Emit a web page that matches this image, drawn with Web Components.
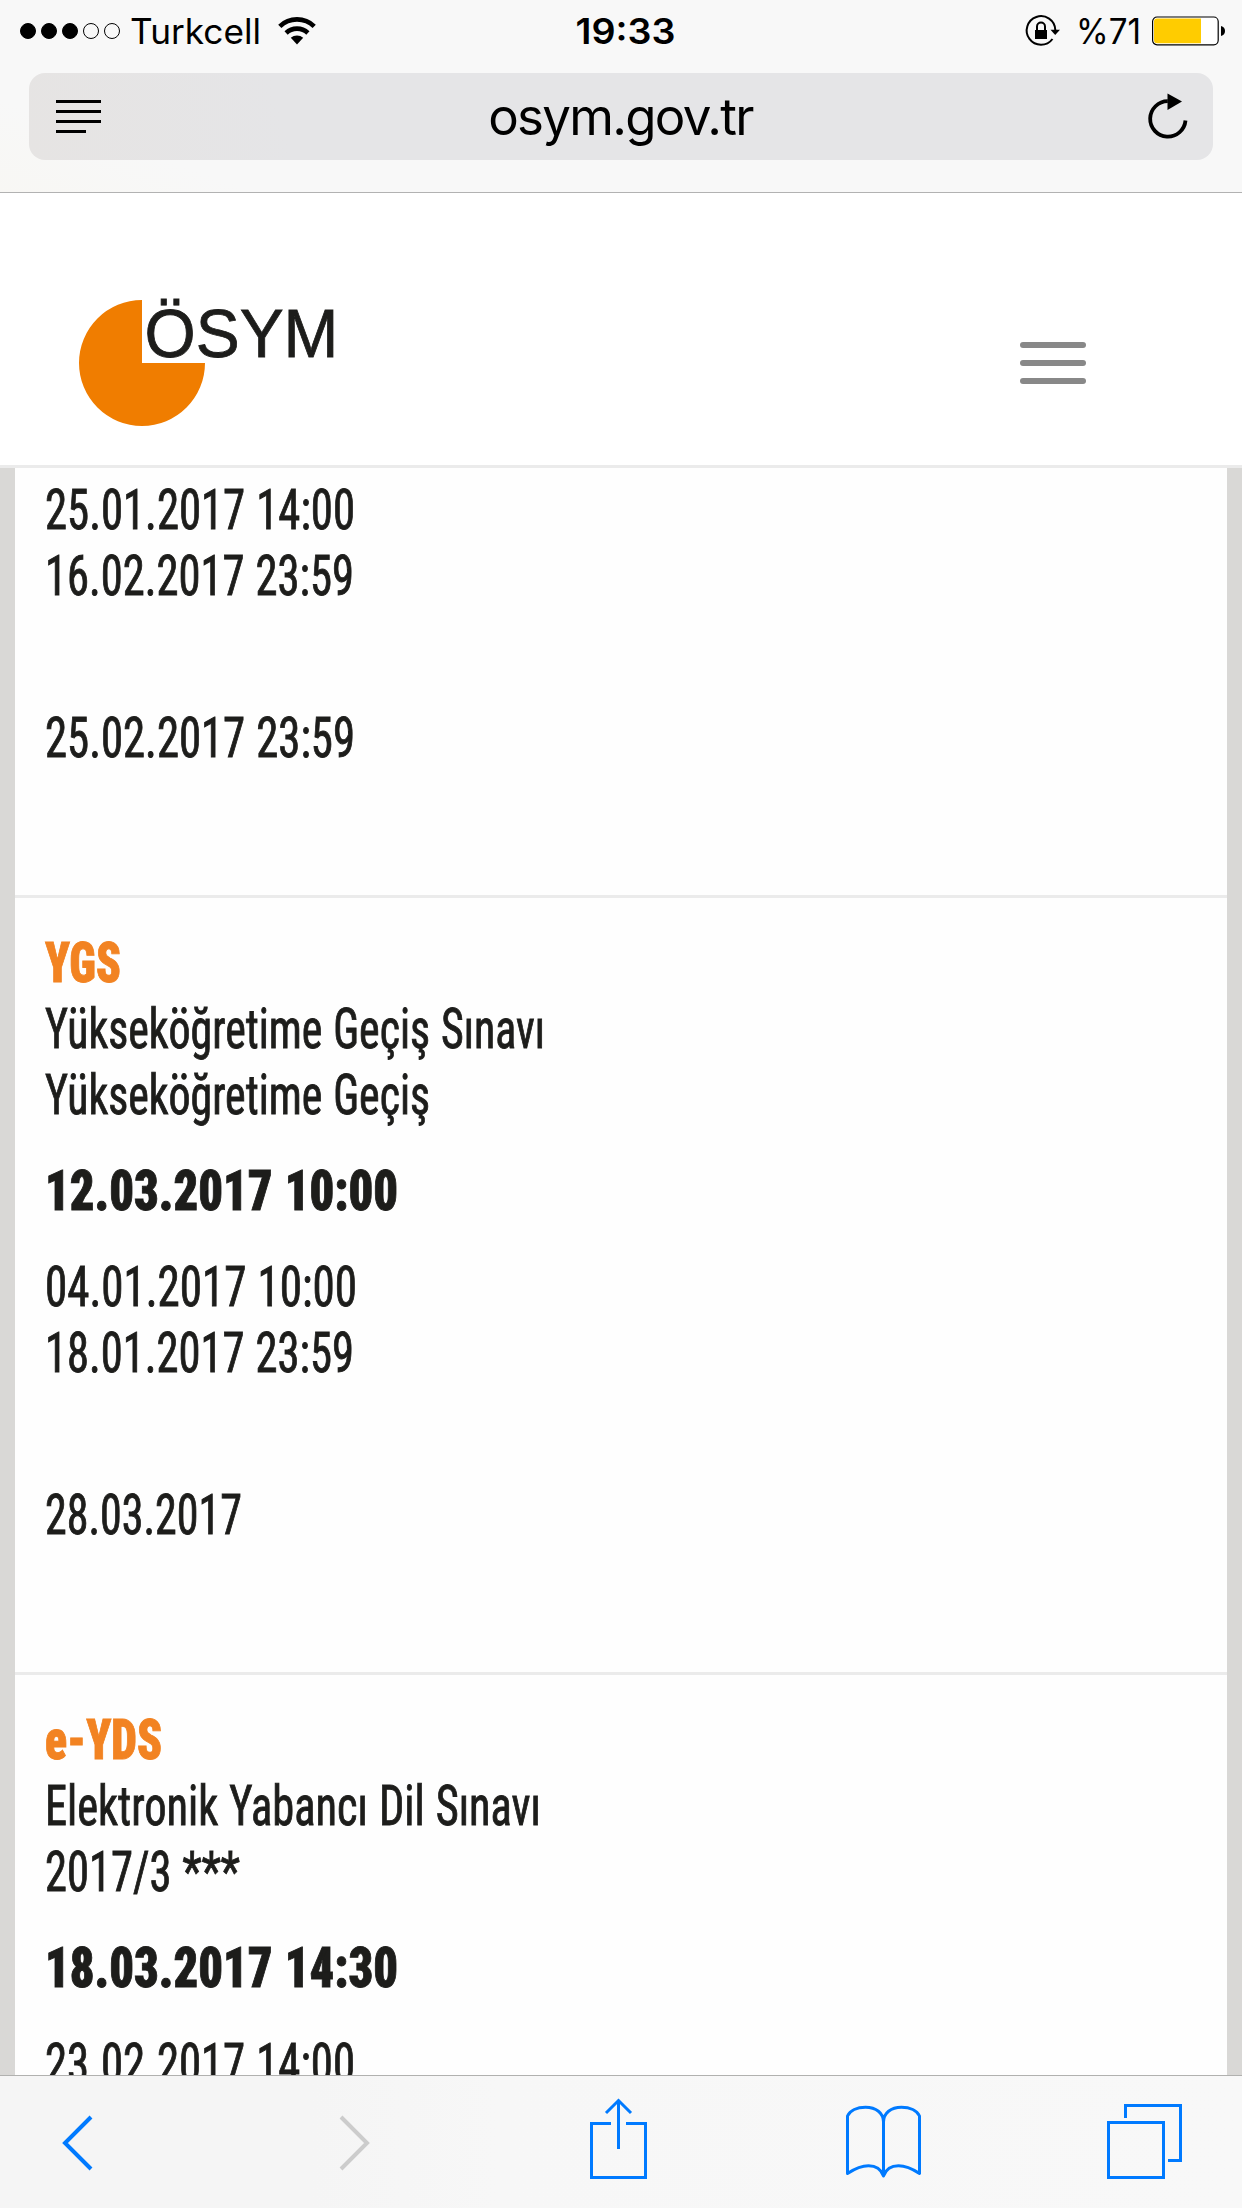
<!DOCTYPE html>
<html lang="tr">
<head>
<meta charset="UTF-8">
<title>ÖSYM</title>
<style>
  body {
    margin: 0;
    width: 1242px;
    height: 2208px;
    overflow: hidden;
    display: flex;
    flex-direction: column;
    background: #fefefe;
    font-family: Inter, "Liberation Sans", sans-serif;
    color: #000;
  }
</style>
</head>
<body>
<status-bar carrier="Turkcell" time="19:33" battery="%71"></status-bar>
<address-bar>osym.gov.tr</address-bar>
<site-header></site-header>
<exam-list>
  <exam-card continued>
    <fit-line slot="dates" width="310">25.01.2017 14:00</fit-line>
    <fit-line slot="dates" width="309">16.02.2017 23:59</fit-line>
    <fit-line slot="result" width="310">25.02.2017 23:59</fit-line>
  </exam-card>
  <exam-card>
    <fit-line slot="title" kind="title" width="76">YGS</fit-line>
    <fit-line slot="title" width="500">Yükseköğretime Geçiş Sınavı</fit-line>
    <fit-line slot="title" width="385">Yükseköğretime Geçiş</fit-line>
    <fit-line slot="exam" kind="exam" width="353">12.03.2017 10:00</fit-line>
    <fit-line slot="dates" width="312">04.01.2017 10:00</fit-line>
    <fit-line slot="dates" width="309">18.01.2017 23:59</fit-line>
    <fit-line slot="result" width="197">28.03.2017</fit-line>
  </exam-card>
  <exam-card>
    <fit-line slot="title" kind="title" width="117">e-YDS</fit-line>
    <fit-line slot="title" width="496">Elektronik Yabancı Dil Sınavı</fit-line>
    <fit-line slot="title" width="195">2017/3 ***</fit-line>
    <fit-line slot="exam" kind="exam" width="353">18.03.2017 14:30</fit-line>
    <fit-line slot="dates" width="310">23.02.2017 14:00</fit-line>
  </exam-card>
</exam-list>
<tool-bar></tool-bar>

<script>
class StatusBar extends HTMLElement {
  constructor() {
    super();
    this.attachShadow({ mode: 'open' });
  }

  connectedCallback() {
    this.shadowRoot.innerHTML = `
      <style>
        :host {
          display: grid;
          grid-template-columns: 1fr auto 1fr;
          align-items: center;
          height: 60px;
          padding: 2px 16px 0 20px;
          box-sizing: border-box;
          background: #f8f8f8;
          font-size: 35px;
          flex: none;
        }
        div { display: flex; align-items: center; }
        .dots { gap: 5px; margin-right: 10px; }
        .dots i {
          width: 16px;
          height: 16px;
          box-sizing: border-box;
          border: 1px solid #000;
          border-radius: 50%;
        }
        .dots i.on { background: #000; }
        svg { display: block; overflow: visible; }
        .right { justify-content: flex-end; }
        .time { font-weight: 600; }
      </style>
      <div>
        <div class="dots"><i class="on"></i><i class="on"></i><i class="on"></i><i></i><i></i></div>
        <svg width="132" height="44"><text x="0" y="34.5" textLength="131" lengthAdjust="spacingAndGlyphs">${this.getAttribute('carrier')}</text></svg>
        <svg width="38" height="28" viewBox="0 0 38 28" style="margin-left:16px">
          <path d="M1.8 9.3A24.7 24.7 0 0 1 36.2 9.3M8.1 16A15.7 15.7 0 0 1 29.9 16" fill="none" stroke="#000" stroke-width="4.6"/>
          <path d="M19 27.4L12.8 20.8A9.4 9.4 0 0 1 25.2 20.8Z"/>
        </svg>
      </div>
      <svg class="time" width="98" height="44"><text x="1.5" y="34.5" textLength="100" lengthAdjust="spacingAndGlyphs">${this.getAttribute('time')}</text></svg>
      <div class="right">
        <svg width="36" height="32" viewBox="0 0 36 32">
          <path d="M30.3 15A14.3 14.3 0 1 0 27.5 24" fill="none" stroke="#000" stroke-width="2"/>
          <path d="M25.5 14.8H35L30.2 20Z"/>
          <path d="M10 15H22V24H10Z"/>
          <path d="M12 15.5V11.5A4 4 0 0 1 20 11.5V15.5" fill="none" stroke="#000" stroke-width="2"/>
        </svg>
        <svg width="65" height="44" style="margin-left:15px"><text x="0" y="34.5" textLength="65" lengthAdjust="spacingAndGlyphs">${this.getAttribute('battery')}</text></svg>
        <svg width="74" height="30" viewBox="0 0 74 30" style="margin-left:11px">
          <rect x=".6" y="1" width="65.6" height="27.8" rx="4.5" fill="#fff" stroke="#000" stroke-width="1.2"/>
          <path d="M49 2.6H5A3 3 0 0 0 2 5.6V24.2A3 3 0 0 0 5 27.2H49Z" fill="#ffcc00"/>
          <path d="M69 10Q73 11 73 15Q73 19 69 20Z"/>
        </svg>
      </div>
    `;
  }
}

class AddressBar extends HTMLElement {
  constructor() {
    super();
    this.attachShadow({ mode: 'open' });
    this.shadowRoot.innerHTML = `
      <style>
        :host {
          display: block;
          flex: none;
          height: 133px;
          box-sizing: border-box;
          padding: 13px 29px 0;
          background: linear-gradient(20deg, #f8f7f4, #f8f8f8 16%);
          border-bottom: 1px solid #b2b2b2;
        }
        .field {
          height: 87px;
          box-sizing: border-box;
          padding: 0 23px 0 27px;
          border-radius: 16px;
          background: linear-gradient(75deg, #e6e4e3, #e5e5e7 22%);
          display: grid;
          grid-template-columns: 1fr auto 1fr;
          align-items: center;
        }
        .url {
          margin-right: 5px;
          font-size: 51px;
          line-height: 87px;
          letter-spacing: -1.7px;
        }
        .reload { justify-self: end; }
      </style>
      <div class="field">
        <svg width="45" height="33" viewBox="0 0 45 33">
          <path d="M0 1.5H45M0 11.5H45M0 21.5H45M0 31.5H30" stroke="#000" stroke-width="3"/>
        </svg>
        <span class="url"><slot></slot></span>
        <svg class="reload" width="42" height="48" viewBox="0 0 42 48">
          <path d="M37.5 27.5A17.7 17.7 0 1 1 19.8 8.2" fill="none" stroke="#000" stroke-width="3.8"/>
          <path d="M19.5 .5L34 8.5L19.5 17Z"/>
        </svg>
      </div>
    `;
  }
}

class SiteHeader extends HTMLElement {
  constructor() {
    super();
    this.attachShadow({ mode: 'open' });
    this.shadowRoot.innerHTML = `
      <style>
        :host {
          display: flex;
          flex: none;
          justify-content: space-between;
          align-items: flex-start;
          height: 275px;
          box-sizing: border-box;
          padding: 107px 156px 0 78px;
          border-bottom: 3px solid #ebebeb;
          background: #fff;
        }
        svg { overflow: visible; }
        text { font: 68px "Liberation Sans", Arial, sans-serif; fill: #1d1d1b; stroke: #1d1d1b; stroke-width: .8; }
        .menu {
          display: flex;
          flex-direction: column;
          gap: 12px;
          margin-top: 42px;
        }
        .menu i { width: 66px; height: 6px; border-radius: 3px; background: #888; }
      </style>
      <svg width="270" height="127" viewBox="0 0 270 127">
        <path d="M64 63V0A63 63 0 1 0 127 63Z" fill="#f07d00"/>
        <text x="66.5" y="57" textLength="194" lengthAdjust="spacingAndGlyphs">ÖSYM</text>
      </svg>
      <div class="menu"><i></i><i></i><i></i></div>
    `;
  }
}

class ExamList extends HTMLElement {
  constructor() {
    super();
    this.attachShadow({ mode: 'open' });
    this.shadowRoot.innerHTML = `
      <style>
        :host {
          display: block;
          flex: 1;
          min-height: 0;
          overflow: hidden;
          border: solid #d9d8d6;
          border-width: 0 15px;
          background: #fefefe;
        }
      </style>
      <slot></slot>
    `;
  }
}

class ExamCard extends HTMLElement {
  constructor() {
    super();
    this.attachShadow({ mode: 'open' });
    this.shadowRoot.innerHTML = `
      <style>
        :host {
          display: block;
          padding: 36px 30px 120px;
          border-bottom: 3px solid #ebebeb;
        }
        :host([continued]) { padding-top: 13px; }
        :host([continued]) .exam { display: none; }
        .exam { padding: 30px 0; }
        .result { padding-top: 96px; }
      </style>
      <slot name="title"></slot>
      <div class="exam"><slot name="exam"></slot></div>
      <slot name="dates"></slot>
      <div class="result"><slot name="result"></slot></div>
    `;
  }
}

// One line of condensed text, set to an exact width
class FitLine extends HTMLElement {
  constructor() {
    super();
    this.attachShadow({ mode: 'open' });
  }

  connectedCallback() {
    this.shadowRoot.innerHTML = `
      <style>
        :host { display: block; height: 66px; }
        svg { display: block; overflow: visible; }
        text {
          font: 400 55px "Roboto Condensed", Roboto, sans-serif;
          font-stretch: 75%;
          word-spacing: 1px;
          fill: #1d1d1b;
          stroke: #1d1d1b;
          stroke-width: .9;
        }
        :host([kind="title"]) text { font-weight: 900; fill: #f28322; stroke: #f28322; }
        :host([kind="exam"]) text { font-weight: 900; }
      </style>
      <svg width="600" height="66">
        <text x="0" y="48" textLength="${this.getAttribute('width')}" lengthAdjust="spacingAndGlyphs">${this.textContent}</text>
      </svg>
    `;
  }
}

class ToolBar extends HTMLElement {
  constructor() {
    super();
    this.attachShadow({ mode: 'open' });
    this.shadowRoot.innerHTML = `
      <style>
        :host {
          display: grid;
          flex: none;
          grid-template-columns: 277px 251px 256px 261px auto;
          align-items: start;
          height: 133px;
          box-sizing: border-box;
          padding: 20px 0 0 62px;
          border-top: 1px solid #b1b1af;
          background: linear-gradient(90deg, #f5f5f5 25%, #f7f7f7 40%, #f8f8f8);
        }
        svg { display: block; fill: none; stroke: #007aff; stroke-width: 3; }
      </style>
      <svg width="32" height="90"><path d="M29 21L3 47L29 73" stroke-width="4"/></svg>
      <svg width="32" height="90"><path d="M2 21L28 47L2 73" style="stroke:#ccc" stroke-width="4"/></svg>
      <svg width="58" height="90"><path d="M21 27.5H1.5V81.5H55.5V27.5H36M28.5 53V5M16 17L28.5 4.5L41 17"/></svg>
      <svg width="76" height="90" stroke-linejoin="round">
        <path d="M37.5 80V26C37.5 17 30 11.2 19.5 11.2C11 11.2 4 14.5 1.5 20V77.5C10 72 16 69.8 22.5 69.8C30 69.8 35 73 37.5 80C40 73 45 69.8 52.5 69.8C59 69.8 65 72 73.5 77.5V20C71 14.5 64 11.2 55.5 11.2C45 11.2 37.5 17 37.5 26"/>
      </svg>
      <svg width="76" height="90"><path d="M1.5 26.5H56.5V81.5H1.5ZM18.5 22V9.5H73.5V64.5H61"/></svg>
    `;
  }
}

customElements.define('status-bar', StatusBar);
customElements.define('address-bar', AddressBar);
customElements.define('site-header', SiteHeader);
customElements.define('exam-list', ExamList);
customElements.define('exam-card', ExamCard);
customElements.define('fit-line', FitLine);
customElements.define('tool-bar', ToolBar);
</script>
</body>
</html>
